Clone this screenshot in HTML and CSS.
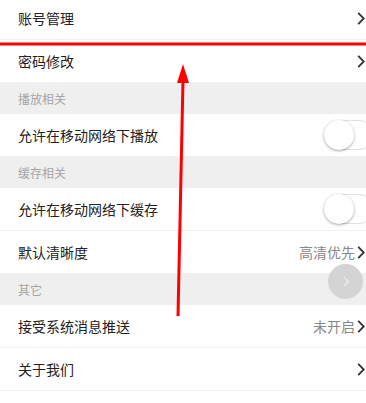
FILE: index.html
```html
<!DOCTYPE html>
<html lang="zh">
<head>
    <meta charset="UTF-8">
    <meta name="viewport" content="width=device-width, initial-scale=1.0">
    <title>设置</title>
    <link rel="stylesheet" href="styles.css">
</head>
<body>

    <!-- 设置列表 -->
    <div class="settings">
        <div class="row">
            <span class="label">账号管理</span>
            <svg class="chev" viewBox="0 0 8 14"><path d="M1 1l6 6-6 6"/></svg>
        </div>
        <div class="row">
            <span class="label">密码修改</span>
            <svg class="chev" viewBox="0 0 8 14"><path d="M1 1l6 6-6 6"/></svg>
        </div>

        <div class="group">播放相关</div>
        <div class="row">
            <span class="label">允许在移动网络下播放</span>
            <span class="switch"><span class="knob"></span></span>
        </div>

        <div class="group">缓存相关</div>
        <div class="row">
            <span class="label">允许在移动网络下缓存</span>
            <span class="switch"><span class="knob"></span></span>
        </div>
        <div class="row">
            <span class="label">默认清晰度</span>
            <span class="value">高清优先</span>
            <svg class="chev" viewBox="0 0 8 14"><path d="M1 1l6 6-6 6"/></svg>
        </div>

        <div class="group">其它</div>
        <div class="row">
            <span class="label">接受系统消息推送</span>
            <span class="value">未开启</span>
            <svg class="chev" viewBox="0 0 8 14"><path d="M1 1l6 6-6 6"/></svg>
        </div>
        <div class="row">
            <span class="label">关于我们</span>
            <svg class="chev" viewBox="0 0 8 14"><path d="M1 1l6 6-6 6"/></svg>
        </div>
        <div class="row"></div>
    </div>

    <!-- 悬浮按钮 -->
    <div class="float-btn">
        <svg viewBox="0 0 10 16"><path d="M2 2l6 6-6 6"/></svg>
    </div>

    <!-- 标注：红线和箭头 -->
    <svg class="marks" viewBox="0 0 366 403">
        <rect x="0" y="42.5" width="366" height="3" fill="#f00"/>
        <line x1="178" y1="316" x2="183" y2="80" stroke="#f00" stroke-width="3"/>
        <polygon points="183,64 177,83 189,83" fill="#f00"/>
    </svg>

</body>
</html>
```

FILE: styles.css
```css
html, body {
    margin: 0;
    padding: 0;
    height: 403px;
    overflow: hidden;
    background: #fff;
}

body {
    font-family: "Noto Sans CJK SC", "Noto Sans", sans-serif;
    color: #222;
    position: relative;
}

/* 设置列表 */
.settings {
    margin-top: -3px;
}

.row {
    display: flex;
    align-items: center;
    height: 42px;
    padding-left: 18px;
    border-bottom: 1px solid #f0f0f0;
    background: #fff;
    font-size: 14px;
}

.label {
    flex: 1;
}

.value {
    color: #888;
    font-size: 14px;
    margin-right: 2px;
}

.chev {
    width: 8px;
    height: 13px;
    margin-right: 1px;
    fill: none;
    stroke: #333;
    stroke-width: 2;
}

/* 分组标题 */
.group {
    height: 31px;
    line-height: 31px;
    padding-left: 18px;
    background: #efefef;
    color: #a5a5a5;
    font-size: 12px;
}

/* 开关 */
.switch {
    position: relative;
    width: 48px;
    height: 28px;
    margin-right: -8px;
    border: 1.5px solid #e0e0e0;
    border-radius: 16px;
    background: #fff;
}

.knob {
    position: absolute;
    left: -1px;
    top: -1px;
    width: 30px;
    height: 30px;
    border-radius: 50%;
    background: #fff;
    box-shadow: 0 1px 3px rgba(0, 0, 0, 0.35);
}

/* 悬浮按钮 */
.float-btn {
    position: absolute;
    left: 328px;
    top: 264px;
    width: 35px;
    height: 35px;
    border-radius: 50%;
    background: #d4d4d4;
    display: flex;
    justify-content: center;
    align-items: center;
}

.float-btn svg {
    width: 8px;
    height: 13px;
    fill: none;
    stroke: #ececec;
    stroke-width: 1.5;
}

/* 标注 */
.marks {
    position: absolute;
    left: 0;
    top: 0;
    width: 366px;
    height: 403px;
    pointer-events: none;
}
```
